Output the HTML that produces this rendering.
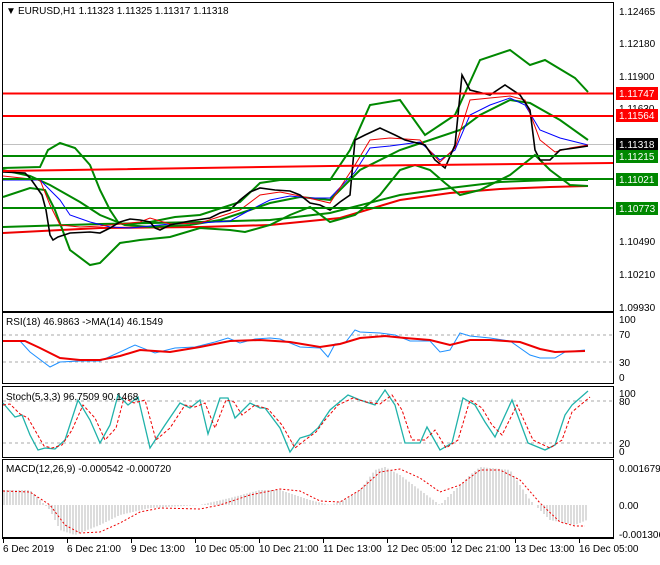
<!DOCTYPE html>
<html><head><meta charset="utf-8"><style>
body{margin:0;background:#fff;width:660px;height:560px;overflow:hidden;font-family:"Liberation Sans",sans-serif}
svg text{font-family:"Liberation Sans",sans-serif;font-size:10px;fill:#000}
</style></head><body>
<svg id="s" width="660" height="560" xmlns="http://www.w3.org/2000/svg">
<rect width="660" height="560" fill="#fff"/>
<rect x="2.5" y="2.5" width="611" height="309" fill="none" stroke="#000"/>
<rect x="2.5" y="312.5" width="611" height="71" fill="none" stroke="#000"/>
<rect x="2.5" y="386.5" width="611" height="71" fill="none" stroke="#000"/>
<rect x="2.5" y="459.5" width="611" height="78" fill="none" stroke="#000"/>
<line x1="2" y1="538.5" x2="614" y2="538.5" stroke="#000"/>
<line x1="3" y1="144.5" x2="613" y2="144.5" stroke="#c0c0c0"/>
<polyline fill="none" stroke="#e00" stroke-width="2" points="3,233 100,228 200,227 270,225 340,218 400,200 450,193 500,189 550,187 588,186"/>
<polyline fill="none" stroke="#080" stroke-width="2" points="3,227 100,224 200,222 270,220 330,213 400,195 450,188 500,182 550,180 588,180"/>
<polyline fill="none" stroke="#080" stroke-width="2" points="3,168 40,167 48,150 60,143 75,148 90,165 100,190 110,210 118,222 125,225 150,222 175,217 200,215 240,202 260,183 280,180 330,180 350,150 370,105 400,100 425,135 440,125 455,115 480,60 510,50 530,65 545,60 575,78 588,92"/>
<polyline fill="none" stroke="#080" stroke-width="2" points="3,170 30,176 50,185 80,202 100,215 125,225 150,227 190,225 220,220 250,210 270,203 300,197 330,200 360,170 400,150 430,140 460,130 480,115 510,100 530,103 560,120 588,140"/>
<polyline fill="none" stroke="#080" stroke-width="2" points="3,197 30,188 45,190 55,210 70,250 90,265 100,263 120,243 140,240 170,237 200,228 230,230 245,232 270,225 290,215 310,207 330,222 355,215 380,195 400,170 415,165 430,170 445,183 460,195 480,190 510,175 535,155 550,170 570,185 588,186"/>
<polyline fill="none" stroke="#00f" stroke-width="1" points="3,180 40,180 60,200 70,215 90,222 110,227 130,228 150,226 170,224 200,223 230,221 250,210 270,200 290,196 310,198 330,198 355,172 370,148 390,146 420,142 440,160 455,150 470,115 490,105 510,98 525,105 540,130 560,138 588,145"/>
<polyline fill="none" stroke="#e00" stroke-width="1" points="3,176 40,180 50,205 60,225 80,227 100,226 140,222 150,218 170,224 200,223 240,210 260,195 280,192 300,196 330,203 355,165 370,140 390,138 420,140 440,162 455,148 470,100 490,98 510,96 525,100 540,140 555,152 570,148 588,145"/>
<polyline fill="none" stroke="#000" stroke-width="1.6" points="3,172 25,173 30,178 35,185 42,195 46,210 50,235 53,240 58,237 70,233 90,232 100,233 110,228 120,222 130,219 140,220 150,222 155,228 160,230 170,225 190,221 210,218 220,213 230,210 240,200 250,192 260,188 275,190 290,191 300,195 310,203 320,205 330,210 340,202 350,195 355,140 365,135 380,128 395,135 405,140 425,145 435,160 445,168 455,145 462,75 470,90 490,95 505,85 520,95 530,110 535,150 540,160 550,160 560,150 575,148 588,146"/>
<line x1="3" y1="93.5" x2="613" y2="93.5" stroke="#f00" stroke-width="2"/>
<line x1="3" y1="116" x2="613" y2="116" stroke="#f00" stroke-width="2"/>
<line x1="3" y1="156" x2="613" y2="156" stroke="#080" stroke-width="2"/>
<polyline fill="none" stroke="#f00" stroke-width="2" points="3,171 330,166 613,163"/>
<line x1="3" y1="179" x2="613" y2="179" stroke="#080" stroke-width="2"/>
<line x1="3" y1="208" x2="613" y2="208" stroke="#080" stroke-width="2"/>
<text x="6" y="14" font-size="7">▼</text>
<text x="18" y="14">EURUSD,H1  1.11323 1.11325 1.11317 1.11318</text>
<g>
<text x="619" y="15">1.12465</text>
<text x="619" y="47">1.12180</text>
<text x="619" y="80">1.11900</text>
<text x="619" y="112">1.11630</text>
<text x="619" y="245">1.10490</text>
<text x="619" y="278">1.10210</text>
<text x="619" y="311">1.09930</text>
<rect x="616" y="87" width="42" height="13" fill="#f00"/><text x="619" y="97" style="fill:#fff">1.11747</text>
<rect x="616" y="109" width="42" height="13" fill="#f00"/><text x="619" y="119" style="fill:#fff">1.11564</text>
<rect x="616" y="138" width="42" height="13" fill="#000"/><text x="619" y="148" style="fill:#fff">1.11318</text>
<rect x="616" y="150" width="42" height="13" fill="#080"/><text x="619" y="160" style="fill:#fff">1.11215</text>
<rect x="616" y="173" width="42" height="13" fill="#080"/><text x="619" y="183" style="fill:#fff">1.11021</text>
<rect x="616" y="202" width="42" height="13" fill="#080"/><text x="619" y="212" style="fill:#fff">1.10773</text>
</g>
<line x1="3" y1="335" x2="613" y2="335" stroke="#aaa" stroke-dasharray="3,3"/>
<line x1="3" y1="362" x2="613" y2="362" stroke="#aaa" stroke-dasharray="3,3"/>
<polyline fill="none" stroke="#1e90ff" points="3,341 20,341 30,352 50,367 60,362 80,361 100,361 120,352 135,345 155,353 175,348 195,347 215,342 228,338 240,343 255,339 270,338 280,339 300,347 320,348 328,357 335,344 345,343 355,330 360,332 380,333 395,335 410,341 430,341 440,352 450,350 460,333 470,336 490,338 510,341 530,355 540,358 555,358 565,352 585,350"/>
<polyline fill="none" stroke="#e00" stroke-width="2" points="3,341 25,341 40,348 60,358 80,360 100,360 120,356 140,350 170,352 200,347 230,341 260,340 290,342 320,347 340,344 360,338 385,336 405,338 430,340 450,345 470,340 490,340 520,342 540,349 555,352 585,351"/>
<text x="6" y="325">RSI(18) 46.9863  -&gt;MA(14) 46.1549</text>
<text x="619" y="323">100</text><text x="619" y="338">70</text><text x="619" y="366">30</text><text x="619" y="381">0</text>
<line x1="3" y1="401" x2="613" y2="401" stroke="#aaa" stroke-dasharray="3,3"/>
<line x1="3" y1="443" x2="613" y2="443" stroke="#aaa" stroke-dasharray="3,3"/>
<polyline fill="none" stroke="#20b2aa" stroke-width="1.3" points="3,403 15,417 22,415 30,435 38,450 45,448 55,449 65,440 78,400 90,420 100,443 110,425 118,395 128,405 138,397 150,448 165,425 180,403 190,408 200,400 208,434 220,398 228,398 235,418 250,403 260,408 265,408 280,428 290,452 300,438 310,435 318,428 330,410 348,395 360,400 375,405 385,390 395,405 405,443 420,443 427,427 440,450 452,443 463,398 475,405 485,422 495,437 512,400 528,443 545,450 555,445 565,415 572,405 588,391"/>
<polyline fill="none" stroke="#e00" stroke-dasharray="3,2" points="3,405 10,404 20,414 28,418 36,432 44,446 52,448 62,445 72,430 83,405 95,418 105,440 116,428 124,398 134,403 145,400 156,440 170,428 185,405 195,407 205,403 215,428 226,400 234,402 242,415 255,405 268,409 282,425 295,448 305,440 316,432 325,420 338,405 353,398 366,402 380,404 392,395 402,410 412,440 425,440 435,430 446,448 458,440 470,400 482,408 492,425 502,435 517,405 533,440 550,448 562,440 572,412 590,397"/>
<text x="6" y="400">Stoch(5,3,3) 96.7509 90.1468</text>
<text x="619" y="397">100</text><text x="619" y="405">80</text><text x="619" y="447">20</text><text x="619" y="455">0</text>
<g id="hist" stroke="#b8b8b8" stroke-width="1"></g>
<polyline fill="none" stroke="#e00" stroke-dasharray="2,2" points="3,491 30,492 50,505 65,525 80,533 100,532 120,523 140,512 160,508 200,509 220,505 250,495 280,489 300,491 320,501 340,502 360,490 380,472 400,469 420,478 440,492 460,485 480,470 500,470 520,480 540,503 560,522 575,526 585,526"/>
<text x="6" y="472">MACD(12,26,9) -0.000542 -0.000720</text>
<text x="619" y="472">0.001679</text><text x="619" y="509">0.00</text><text x="619" y="538">-0.001306</text>
<g id="dates"></g>
</svg>
<script>
var ns="http://www.w3.org/2000/svg",s=document.getElementById('s');
var h=[[3,490],[30,490],[40,500],[50,510],[60,530],[75,535],[100,525],[120,515],[150,508],[200,505],[230,498],[260,490],[280,490],[310,500],[330,505],[345,500],[360,490],[375,470],[385,467],[400,475],[420,490],[440,505],[455,490],[470,475],[480,467],[510,470],[530,500],[550,520],[575,525],[587,520]];
function iv(x){for(var i=0;i<h.length-1;i++){if(x>=h[i][0]&&x<=h[i+1][0]){var t=(x-h[i][0])/(h[i+1][0]-h[i][0]);return h[i][1]+t*(h[i+1][1]-h[i][1]);}}return 505;}
var g=document.getElementById('hist');
for(var x=4;x<=587;x+=3){var l=document.createElementNS(ns,'line');l.setAttribute('x1',x);l.setAttribute('x2',x);l.setAttribute('y1',505);l.setAttribute('y2',iv(x));g.appendChild(l);}
var d=['6 Dec 2019','6 Dec 21:00','9 Dec 13:00','10 Dec 05:00','10 Dec 21:00','11 Dec 13:00','12 Dec 05:00','12 Dec 21:00','13 Dec 13:00','16 Dec 05:00'];
var dg=document.getElementById('dates');
for(var i=0;i<d.length;i++){var x=3+i*64;var l=document.createElementNS(ns,'line');l.setAttribute('x1',x+.5);l.setAttribute('x2',x+.5);l.setAttribute('y1',538);l.setAttribute('y2',543);l.setAttribute('stroke','#000');dg.appendChild(l);
var t=document.createElementNS(ns,'text');t.setAttribute('x',x);t.setAttribute('y',552);t.textContent=d[i];dg.appendChild(t);}
</script>
</body></html>
